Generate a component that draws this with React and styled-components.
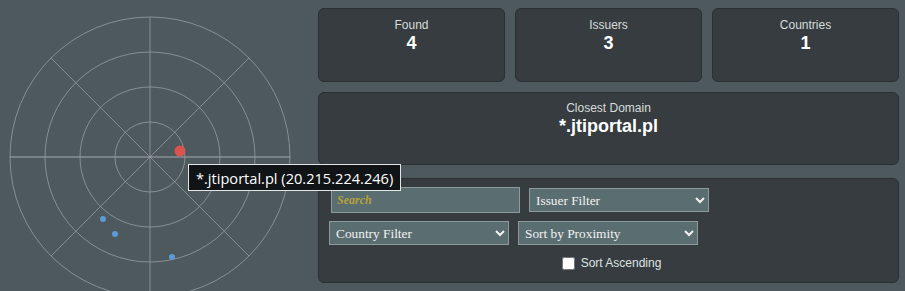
import React from 'react';
import styled, { createGlobalStyle } from 'styled-components';

const GlobalStyle = createGlobalStyle`
  html, body {
    margin: 0;
    padding: 0;
    background: #4e595d;
    overflow: hidden;
  }
`;

const Page = styled.div`
  position: relative;
  display: flex;
  width: 905px;
  height: 291px;
  overflow: hidden;
  font-family: "Liberation Sans", Arial, sans-serif;
`;

const RadarPane = styled.div`
  width: 310px;
  flex-shrink: 0;
`;

const Side = styled.div`
  display: flex;
  flex-direction: column;
  width: 581px;
  margin-left: 8px;
  padding-top: 8px;
`;

const StatRow = styled.div`
  display: flex;
  gap: 10px;
`;

const Card = styled.div`
  box-sizing: border-box;
  flex: ${({ wide }) => (wide ? 'none' : 1)};
  height: ${({ h }) => h}px;
  margin-top: ${({ mt }) => mt || 0}px;
  background: #363c3f;
  border: 1px solid #2a2f31;
  border-radius: 6px;
  text-align: center;
  padding-top: ${({ pt }) => pt || 9}px;
  color: #fff;
`;

const Label = styled.div`
  font-size: 12px;
  line-height: 15px;
  color: #d8dcdc;
`;

const Value = styled.div`
  font-size: 18px;
  font-weight: bold;
  line-height: 21px;
  color: #fff;
`;

const FilterPanel = styled.div`
  box-sizing: border-box;
  height: 105px;
  margin-top: 13px;
  background: #363c3f;
  border: 1px solid #2a2f31;
  border-radius: 6px;
  padding-top: 8px;
`;

const FilterRow = styled.div`
  display: flex;
  align-items: center;
  gap: 9px;
  padding-left: ${({ pl }) => pl}px;
  margin-top: ${({ mt }) => mt || 0}px;
`;

const SearchInput = styled.input`
  box-sizing: border-box;
  width: 189px;
  height: 26px;
  background: #5a6d71;
  border: 1px solid #8d9a9c;
  padding: 0 5px;
  font-family: "Liberation Serif", "Times New Roman", serif;
  font-size: 12px;
  color: #eee;
  outline: none;
  &::placeholder {
    color: #b3a23c;
    font-style: italic;
    font-weight: bold;
  }
`;

const Select = styled.select`
  box-sizing: border-box;
  width: 180px;
  height: 24px;
  background: #5a6d71;
  border: 1px solid #8d9a9c;
  color: #f2f2f2;
  font-family: "Liberation Serif", "Times New Roman", serif;
  font-size: 13.33px;
  padding: 0 2px;
`;

const CheckRow = styled.label`
  display: flex;
  align-items: center;
  justify-content: center;
  gap: 6px;
  margin-top: 11px;
  margin-left: 6px;
  font-size: 12px;
  color: #dfe2e2;
  input {
    margin: 0;
    width: 13px;
    height: 13px;
  }
`;

const Tooltip = styled.div`
  position: absolute;
  left: 188px;
  top: 164px;
  box-sizing: border-box;
  height: 27px;
  padding: 0 7px;
  display: flex;
  align-items: center;
  background: #111416;
  border: 1px solid #e6e6e6;
  color: #fff;
  font-family: "Open Sans", "DejaVu Sans", sans-serif;
  font-size: 14.6px;
  white-space: nowrap;
`;

const blips = [
  { x: 180, y: 151, r: 5.5, c: '#d9534f' },
  { x: 103, y: 219, r: 3, c: '#5b9bd5' },
  { x: 115, y: 234, r: 3, c: '#5b9bd5' },
  { x: 172, y: 257, r: 3, c: '#5b9bd5' },
];

const Radar = () => {
  const cx = 150;
  const cy = 157;
  const R = 140;
  const d = R * Math.SQRT1_2;
  return (
    <svg width="310" height="291" viewBox="0 0 310 291">
      <g stroke="#9aa2a2" strokeOpacity="0.75" fill="none" strokeWidth="1">
        {[35, 70, 105, 140].map(r => <circle key={r} cx={cx} cy={cy} r={r} />)}
        <line x1={cx} y1={cy - R} x2={cx} y2={cy + R} />
        <line x1={cx - R} y1={cy} x2={cx + R} y2={cy} strokeWidth="1.6" />
        <line x1={cx - d} y1={cy - d} x2={cx + d} y2={cy + d} />
        <line x1={cx - d} y1={cy + d} x2={cx + d} y2={cy - d} />
      </g>
      {blips.map((b, i) => <circle key={i} cx={b.x} cy={b.y} r={b.r} fill={b.c} />)}
    </svg>
  );
};

const App = () => (
  <Page>
    <GlobalStyle />
    <RadarPane>
      <Radar />
    </RadarPane>
    <Side>
      <StatRow>
        <Card h={74}><Label>Found</Label><Value>4</Value></Card>
        <Card h={74}><Label>Issuers</Label><Value>3</Value></Card>
        <Card h={74}><Label>Countries</Label><Value>1</Value></Card>
      </StatRow>
      <Card wide h={73} mt={10} pt={8}>
        <Label>Closest Domain</Label>
        <Value>*.jtiportal.pl</Value>
      </Card>
      <FilterPanel>
        <FilterRow pl={12}>
          <SearchInput placeholder="Search" />
          <Select defaultValue="">
            <option value="">Issuer Filter</option>
          </Select>
        </FilterRow>
        <FilterRow pl={10} mt={8}>
          <Select defaultValue="">
            <option value="">Country Filter</option>
          </Select>
          <Select defaultValue="p">
            <option value="p">Sort by Proximity</option>
          </Select>
        </FilterRow>
        <CheckRow>
          <input type="checkbox" />
          Sort Ascending
        </CheckRow>
      </FilterPanel>
    </Side>
    <Tooltip>*.jtiportal.pl (20.215.224.246)</Tooltip>
  </Page>
);

export default App;
